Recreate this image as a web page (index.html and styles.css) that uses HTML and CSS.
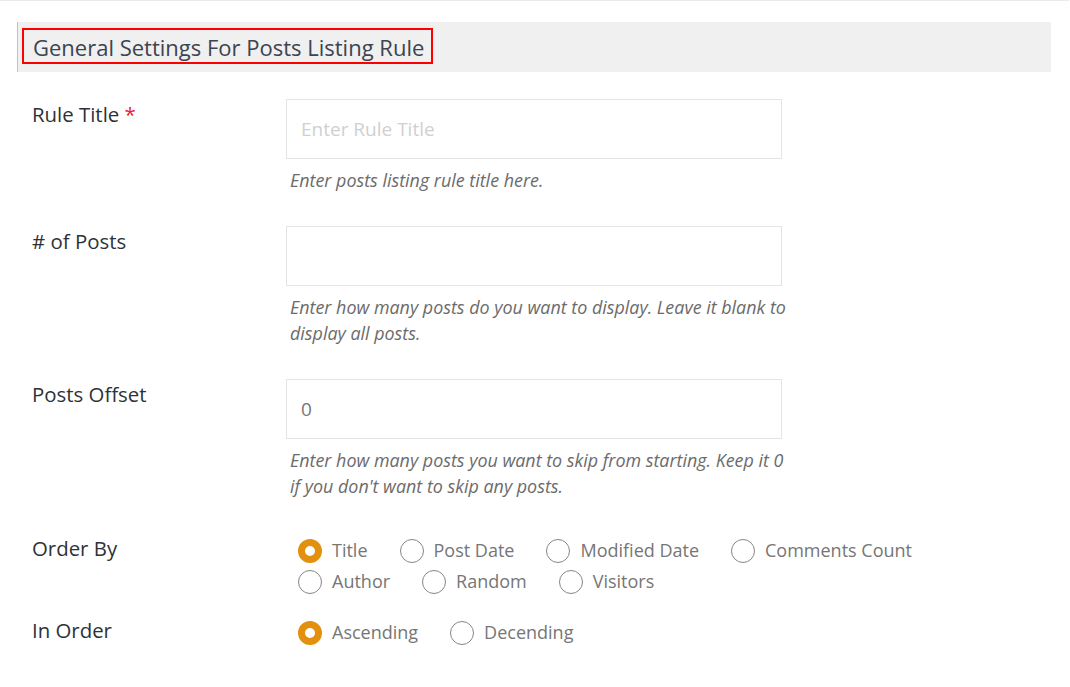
FILE: index.html
```html
<!DOCTYPE html>
<html>
<head>
<meta charset="utf-8">
<link rel="stylesheet" href="styles.css">
</head>
<body>
<div class="topline"></div>
<div class="wrap">
  <div class="section-head">
    <h2 class="section-title">General Settings For Posts Listing Rule</h2>
  </div>

  <div class="row">
    <div class="label">Rule Title <span class="req">*</span></div>
    <div class="control">
      <input class="field" type="text" placeholder="Enter Rule Title">
      <p class="help">Enter posts listing rule title here.</p>
    </div>
  </div>

  <div class="row">
    <div class="label"># of Posts</div>
    <div class="control">
      <input class="field" type="text">
      <p class="help">Enter how many posts do you want to display. Leave it blank to display all posts.</p>
    </div>
  </div>

  <div class="row">
    <div class="label">Posts Offset</div>
    <div class="control">
      <input class="field" type="text" value="0">
      <p class="help">Enter how many posts you want to skip from starting. Keep it 0 if you don't want to skip any posts.</p>
    </div>
  </div>

  <div class="row row-radio">
    <div class="label">Order By</div>
    <div class="control">
      <div class="radios">
        <label class="radio checked"><span class="dot"></span>Title</label>
        <label class="radio"><span class="dot"></span>Post Date</label>
        <label class="radio"><span class="dot"></span>Modified Date</label>
        <label class="radio"><span class="dot"></span>Comments Count</label>
      </div>
      <div class="radios">
        <label class="radio"><span class="dot"></span>Author</label>
        <label class="radio"><span class="dot"></span>Random</label>
        <label class="radio"><span class="dot"></span>Visitors</label>
      </div>
    </div>
  </div>

  <div class="row row-radio">
    <div class="label">In Order</div>
    <div class="control">
      <div class="radios">
        <label class="radio checked"><span class="dot"></span>Ascending</label>
        <label class="radio"><span class="dot"></span>Decending</label>
      </div>
    </div>
  </div>
</div>
</body>
</html>
```

FILE: styles.css
```css
* { box-sizing: border-box; }
html, body {
  margin: 0;
  padding: 0;
  background: #fff;
  font-family: "Open Sans", "Liberation Sans", sans-serif;
}
.topline {
  height: 1px;
  width: 1069px;
  background: #ebebeb;
}
.wrap {
  width: 1034px;
  margin-left: 17px;
  padding-top: 21px;
}
.section-head {
  height: 50px;
  background: #f0f0f0;
  border-left: 1px solid #f0c24a;
  padding: 6px 0 0 4px;
}
.section-title {
  display: inline-block;
  margin: 0;
  height: 36px;
  padding: 1px 7px 0 9px;
  border: 2px solid #ff0000;
  font-weight: 400;
  font-size: 22px;
  line-height: 32px;
  color: #3b4450;
}
.row {
  display: flex;
  padding-left: 15px;
  margin-top: 27px;
}
.row + .row { margin-top: 33px; }
.label {
  width: 254px;
  flex: none;
  font-size: 20.4px;
  line-height: 30px;
  color: #2d3238;
}
.req { color: #ee2233; }
.control {
  width: 496px;
}
.field {
  display: block;
  width: 496px;
  height: 60px;
  border: 1px solid #e4e4e4;
  background: #fff;
  padding: 0 14px;
  font-family: "Open Sans", "Liberation Sans", sans-serif;
  font-size: 19px;
  color: #777;
  outline: none;
}
.field::placeholder { color: #d0d0d0; }
.help {
  margin: 8px 0 0 4px;
  font-style: italic;
  font-size: 17.9px;
  line-height: 26px;
  color: #6b6b6b;
  width: 500px;
}
.row-radio { margin-top: 30px; }
.row + .row-radio { margin-top: 34px; }
.row-radio + .row-radio { margin-top: 18px; }
.radios {
  display: flex;
  white-space: nowrap;
  gap: 32px;
  padding-left: 12px;
}
.radios:first-child { padding-top: 2px; }
.radio {
  display: flex;
  align-items: center;
  gap: 10px;
  font-size: 18px;
  line-height: 31px;
  color: #767676;
}
.dot {
  width: 24px;
  height: 24px;
  border-radius: 50%;
  border: 1px solid #8a8580;
  background: #fff;
  flex: none;
}
.checked .dot {
  border: 7px solid #e2900e;
  background: #fff;
}
```
